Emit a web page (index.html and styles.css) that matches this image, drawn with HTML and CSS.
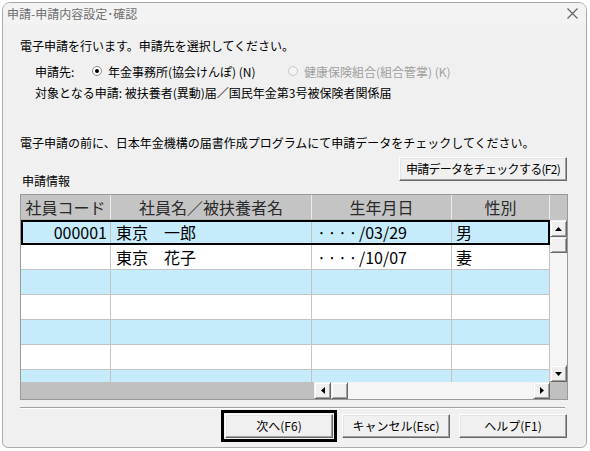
FILE: index.html
```html
<html>
	<head>
		<meta charset="utf-8">
		<title>申請-申請内容設定･確認</title>
		<link rel="stylesheet" href="styles.css">
	</head>
	<body>
		<div class="dialog">
			<div class="titlebar">
				<span class="title">申請-申請内容設定･確認</span>
				<svg class="close" width="11" height="11" viewBox="0 0 11 11"><path d="M0.5 0.5L10.5 10.5M10.5 0.5L0.5 10.5" stroke="#606060" stroke-width="1.1" fill="none"/></svg>
			</div>
			<div class="content">
				<p class="lead">電子申請を行います。申請先を選択してください。</p>
				<div class="dest">
					<span class="dest-label">申請先:</span>
					<label class="radio first"><span class="dot checked"></span>年金事務所(協会けんぽ) (N)</label>
					<label class="radio disabled"><span class="dot"></span>健康保険組合(組合管掌) (K)</label>
				</div>
				<p class="target">対象となる申請: 被扶養者(異動)届／国民年金第3号被保険者関係届</p>
				<p class="notice">電子申請の前に、日本年金機構の届書作成プログラムにて申請データをチェックしてください。</p>

				<div class="toolbar">
					<span class="section">申請情報</span>
					<button class="btn check">申請データをチェックする(F2)</button>
				</div>

				<div class="grid">
					<div class="grid-main">
						<div class="cells">
							<div class="row head">
								<div class="cell">社員コード</div>
								<div class="cell">社員名／被扶養者名</div>
								<div class="cell">生年月日</div>
								<div class="cell">性別</div>
							</div>
							<div class="row blue selected">
								<div class="cell num">000001</div>
								<div class="cell">東京　一郎</div>
								<div class="cell"><span class="mask">····</span>/03/29</div>
								<div class="cell">男</div>
							</div>
							<div class="row">
								<div class="cell num"></div>
								<div class="cell">東京　花子</div>
								<div class="cell"><span class="mask">····</span>/10/07</div>
								<div class="cell">妻</div>
							</div>
							<div class="row blue"><div class="cell"></div><div class="cell"></div><div class="cell"></div><div class="cell"></div></div>
							<div class="row"><div class="cell"></div><div class="cell"></div><div class="cell"></div><div class="cell"></div></div>
							<div class="row blue"><div class="cell"></div><div class="cell"></div><div class="cell"></div><div class="cell"></div></div>
							<div class="row"><div class="cell"></div><div class="cell"></div><div class="cell"></div><div class="cell"></div></div>
							<div class="row blue"><div class="cell"></div><div class="cell"></div><div class="cell"></div><div class="cell"></div></div>
						</div>
						<div class="vscroll">
							<div class="corner-top"></div>
							<div class="sb-btn"><svg width="7" height="4" viewBox="0 0 7 4"><path d="M3.5 0L7 4H0Z" fill="#000"/></svg></div>
							<div class="sb-thumb"></div>
							<div class="sb-track"></div>
							<div class="sb-btn"><svg width="7" height="4" viewBox="0 0 7 4"><path d="M0 0H7L3.5 4Z" fill="#000"/></svg></div>
						</div>
					</div>
					<div class="hrow">
						<div class="filler"></div>
						<div class="hscroll">
							<div class="sb-btn"><svg width="4" height="7" viewBox="0 0 4 7"><path d="M0 3.5L4 0V7Z" fill="#000"/></svg></div>
							<div class="sb-thumb"></div>
							<div class="sb-track"></div>
							<div class="sb-btn"><svg width="4" height="7" viewBox="0 0 4 7"><path d="M0 0L4 3.5L0 7Z" fill="#000"/></svg></div>
						</div>
						<div class="corner"></div>
					</div>
				</div>

				<hr class="sep">

				<div class="actions">
					<button class="btn default">次へ(F6)</button>
					<button class="btn">キャンセル(Esc)</button>
					<button class="btn">ヘルプ(F1)</button>
				</div>
			</div>
		</div>
	</body>
</html>
```

FILE: styles.css
```css
body {
	margin: 0;
	background: #ffffff;
	font-family: "Noto Sans CJK JP", "Noto Sans", sans-serif;
}

.dialog {
	margin: 2px 0 0 2px;
	width: 585px;
	height: 446px;
	box-sizing: border-box;
	border: 1px solid #a9a9a9;
	border-radius: 8px 8px 6px 6px;
	background: #f0f0f0;
	overflow: hidden;
	font-size: 12px;
	color: #000;
}

.titlebar {
	height: 21px;
	display: flex;
	align-items: center;
	justify-content: space-between;
	padding: 0 8px 0 4px;
	background: #f3f3f3;
}
.title {
	color: #6f6f6f;
	line-height: 14px;
}
.close {
	display: block;
}

.content {
	padding: 0 19px 0 17px;
}
.content p {
	margin: 0;
	line-height: 16px;
}
.lead {
	margin-top: 14px !important;
}

.dest {
	margin-top: 9px;
	padding-left: 15px;
	display: flex;
	align-items: center;
	height: 16px;
}
.dest-label {
	width: 57px;
}
.radio {
	display: flex;
	align-items: center;
}
.radio.first {
	width: 196px;
}
.radio.disabled {
	color: #a0a0a0;
}
.dot {
	width: 8px;
	height: 8px;
	border: 1px solid #8a8a8a;
	border-radius: 50%;
	background: #fff;
	margin-right: 6px;
	display: flex;
	align-items: center;
	justify-content: center;
}
.dot.checked::after {
	content: "";
	width: 4px;
	height: 4px;
	border-radius: 50%;
	background: #000;
}
.radio.disabled .dot {
	border-color: #c8c8c8;
	background: #f4f4f4;
}

.target {
	margin-top: 6px !important;
	padding-left: 15px;
}
.notice {
	margin-top: 34px !important;
}

.toolbar {
	margin-top: 6px;
	display: flex;
	align-items: flex-end;
	justify-content: space-between;
}
.section {
	line-height: 14px;
	margin-bottom: -7px;
	padding-left: 2px;
}

.btn {
	font-family: inherit;
	font-size: 12px;
	color: #000;
	height: 24px;
	width: 108px;
	padding: 0;
	background: #f0f0f0;
	border: 1px solid;
	border-color: #ffffff #696969 #696969 #ffffff;
	box-shadow: inset -1px -1px 0 #a0a0a0, inset 1px 1px 0 #e3e3e3;
	line-height: 20px;
	white-space: nowrap;
}
.btn.check {
	width: 168px;
	letter-spacing: -0.7px;
}
.btn.default {
	outline: 3px solid #000;
	outline-offset: 1px;
}

.grid {
	margin-top: 13px;
	width: 548px;
	box-sizing: border-box;
	border: 1px solid #9a9a9a;
	background: #c0c0c0;
}
.grid-main {
	display: flex;
}
.cells {
	width: 529px;
	height: 187px;
	overflow: hidden;
}
.row {
	display: grid;
	grid-template-columns: 90px 201px 140px 98px;
	height: 25px;
	background: #ffffff;
	font-size: 16px;
	line-height: 24px;
}
.row.blue {
	background: #c6ecfc;
}
.row.selected {
	outline: 2px solid #000;
	outline-offset: -2px;
}
.cell {
	box-sizing: border-box;
	border-right: 1px solid #c4c4c4;
	border-bottom: 1px solid #c4c4c4;
	padding-left: 5px;
	white-space: nowrap;
	overflow: hidden;
}
.cell:last-child {
	padding-left: 4px;
}
.cell.num {
	text-align: right;
	padding: 0 3px 0 0;
}
.mask {
	letter-spacing: 1.5px;
}
.row.head {
	background: #c4c4c4;
	color: #2a2a2a;
}
.row.head .cell {
	text-align: center;
	padding: 0;
	border-right: 1px solid #ececec;
	border-bottom: 1px solid #b0b0b0;
}

.vscroll {
	width: 17px;
	height: 187px;
	display: flex;
	flex-direction: column;
}
.corner-top {
	height: 25px;
	background: #c4c4c4;
}
.sb-btn {
	width: 17px;
	height: 17px;
	flex: none;
	box-sizing: border-box;
	background: #f0f0f0;
	border: 1px solid;
	border-color: #f0f0f0 #696969 #696969 #f0f0f0;
	box-shadow: inset 1px 1px 0 #ffffff, inset -1px -1px 0 #a0a0a0;
	display: flex;
	align-items: center;
	justify-content: center;
}
.sb-thumb {
	width: 17px;
	height: 17px;
	flex: none;
	box-sizing: border-box;
	background: #f0f0f0;
	border: 1px solid;
	border-color: #f0f0f0 #696969 #696969 #f0f0f0;
	box-shadow: inset 1px 1px 0 #ffffff, inset -1px -1px 0 #a0a0a0;
}
.vscroll .sb-thumb {
	height: 16px;
}
.sb-track {
	flex: 1;
	background: #f5f5f5;
}

.hrow {
	display: flex;
	height: 17px;
}
.filler {
	flex: 1;
}
.hscroll {
	width: 236px;
	display: flex;
}
.corner {
	width: 17px;
}

.sep {
	margin: 7px 2px 0 0;
	border: none;
	border-top: 1px solid #a0a0a0;
	border-bottom: 1px solid #ffffff;
}

.actions {
	margin-top: 5px;
	display: flex;
	justify-content: flex-end;
	gap: 9px;
}
```
